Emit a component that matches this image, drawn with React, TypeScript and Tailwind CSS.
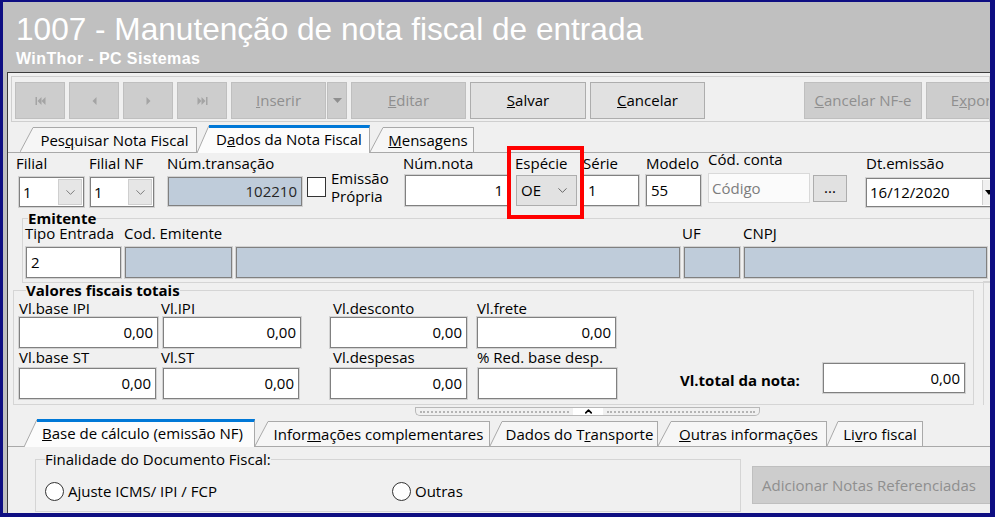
import React from 'react';
import { ChevronDown, ChevronUp } from 'lucide-react';

const edit = 'border border-[#808080] shadow-[0_0_0_1px_#d2d2d2]';
const readOnly = `${edit} bg-[#bfccda]`;
const white = `${edit} bg-white`;
const btnOff = 'h-[37px] flex items-center justify-center bg-[#cdcdcd] border border-[#bfbfbf] text-[#8f8f8f] shrink-0';
const btnOn = 'h-[37px] flex items-center justify-center bg-[#e1e1e1] border border-[#adadad] text-black shrink-0';

const NavIcon = ({ kind }: { kind: 'first' | 'prev' | 'next' | 'last' }) => (
  <svg width="11" height="10" viewBox="0 0 11 10" fill="#a4a4a4">
    {kind === 'first' && (
      <>
        <rect x="0.5" y="1" width="1.5" height="8" />
        <polygon points="6.5,1 2.5,5 6.5,9" />
        <polygon points="10.5,1 6.5,5 10.5,9" />
      </>
    )}
    {kind === 'prev' && <polygon points="7.5,1 3.5,5 7.5,9" />}
    {kind === 'next' && <polygon points="3.5,1 7.5,5 3.5,9" />}
    {kind === 'last' && (
      <>
        <polygon points="0.5,1 4.5,5 0.5,9" />
        <polygon points="4.5,1 8.5,5 4.5,9" />
        <rect x="9" y="1" width="1.5" height="8" />
      </>
    )}
  </svg>
);

interface TabProps {
  label: React.ReactNode;
  width: number;
  slant: number;
  active?: boolean;
}

const Tab: React.FC<TabProps> = ({ label, width, slant, active }) => {
  const h = active ? 28 : 25;
  const fill = active ? '#fcfcfc' : '#f6f6f6';
  return (
    <div className={`flex items-end shrink-0 ${active ? 'mb-[-1px] relative z-10' : ''}`} style={{ height: h }}>
      <svg width={slant} height={h} className="shrink-0 block">
        <polygon points={`0,${h} ${slant},0 ${slant},${h}`} fill={fill} />
        <line x1="0" y1={h} x2={slant} y2="0.5" stroke="#a9a9a9" strokeWidth="1" />
      </svg>
      <div
        className={`h-full flex items-center justify-center whitespace-nowrap border-r border-[#a9a9a9] leading-[15px] ${
          active ? 'bg-[#fcfcfc] border-t-[3px] border-t-[#0078d7] pb-[2px]' : 'bg-[#f6f6f6] border-t'
        }`}
        style={{ width }}
      >
        {label}
      </div>
    </div>
  );
};

const Combo = ({ value, w }: { value: string; w: number }) => (
  <div className={`${white} h-[30px] flex`} style={{ width: w }}>
    <div className="flex-1 pl-[3px] flex items-center leading-[15px]">{value}</div>
    <div className="w-[24px] my-[1px] mr-[1px] bg-[#e6e6e6] border border-[#cfcfcf] flex items-center justify-center">
      <ChevronDown size={15} strokeWidth={1.4} color="#6d6d6d" />
    </div>
  </div>
);

const Label = ({ children, className = '' }: { children?: React.ReactNode; className?: string }) => (
  <div className={`h-[15px] leading-[15px] whitespace-nowrap ${className}`}>{children}</div>
);

const Radio = ({ label }: { label: string }) => (
  <div className="flex items-center">
    <div className="w-[19px] h-[19px] rounded-full border border-[#333333] bg-white shrink-0" />
    <span className="ml-[4px] leading-[15px]">{label}</span>
  </div>
);

const App: React.FC = () => {
  return (
    <div className="relative w-[995px] h-[517px] overflow-hidden bg-[#0e0e82] pt-[2px] pl-[3px] pr-[5px] pb-[4px] text-[15px] text-black font-['Open_Sans',sans-serif]">
      <div className="h-full flex flex-col bg-[#c0c0c0] overflow-hidden">
        {/* title bar */}
        <div className="h-[70px] shrink-0 pl-[13px] pt-[12px] text-white font-['Liberation_Sans',Arial,sans-serif]">
          <div className="text-[31.6px] leading-[31px] whitespace-nowrap">1007 - Manutenção de nota fiscal de entrada</div>
          <div className="mt-[6px] text-[16px] leading-[16px] font-bold tracking-[0.4px] whitespace-nowrap">WinThor - PC Sistemas</div>
        </div>

        <div className="flex-1 flex pl-[4px] min-h-0">
          <div className="flex-1 flex flex-col border-l border-t border-[#3c3c3c] bg-[#f0f0f0] overflow-hidden min-w-0">
            {/* toolbar */}
            <div className="ml-[3px] mt-[3px] h-[46px] shrink-0 border border-[#cfcfcf] pl-[3px] pt-[5px] flex gap-[4px] overflow-hidden">
              <div className={`${btnOff} w-[50px]`}><NavIcon kind="first" /></div>
              <div className={`${btnOff} w-[50px]`}><NavIcon kind="prev" /></div>
              <div className={`${btnOff} w-[50px]`}><NavIcon kind="next" /></div>
              <div className={`${btnOff} w-[50px]`}><NavIcon kind="last" /></div>
              <div className="flex gap-[1px] shrink-0">
                <div className={`${btnOff} w-[95px]`}><span><u>I</u>nserir</span></div>
                <div className={`${btnOff} w-[20px]`}>
                  <svg width="9" height="5" viewBox="0 0 9 5"><polygon points="0,0 9,0 4.5,5" fill="#8f8f8f" /></svg>
                </div>
              </div>
              <div className={`${btnOff} w-[115px]`}><span><u>E</u>ditar</span></div>
              <div className={`${btnOn} w-[116px]`}><span><u>S</u>alvar</span></div>
              <div className={`${btnOn} w-[115px]`}><span><u>C</u>ancelar</span></div>
              <div className={`${btnOff} w-[118px] ml-[95px]`}><span><u>C</u>ancelar NF-e</span></div>
              <div className={`${btnOff} w-[110px]`}><span className="whitespace-nowrap">E<u>x</u>portar</span></div>
            </div>

            {/* top tabs */}
            <div className="h-[31px] shrink-0 flex items-end pl-[12px] border-b border-[#a9a9a9]">
              <Tab slant={13} width={164} label={<span>Pes<u>q</u>uisar Nota Fiscal</span>} />
              <Tab slant={12} width={161} active label={<span>D<u>a</u>dos da Nota Fiscal</span>} />
              <Tab slant={13} width={91} label={<span><u>M</u>ensagens</span>} />
            </div>

            {/* first row */}
            <div className="h-[58px] shrink-0 flex items-start">
              <div className="ml-[8px] w-[68px] shrink-0">
                <Label className="mt-[3px]">Filial</Label>
                <div className="mt-[6px] ml-[3px]"><Combo value="1" w={65} /></div>
              </div>
              <div className="ml-[5px] w-[65px] shrink-0">
                <Label className="mt-[3px]">Filial NF</Label>
                <div className="mt-[6px] ml-[1px]"><Combo value="1" w={64} /></div>
              </div>
              <div className="ml-[13px] w-[135px] shrink-0">
                <Label className="mt-[3px]">Núm.transação</Label>
                <div className={`${readOnly} mt-[6px] ml-[1px] w-[134px] h-[29px] flex items-center justify-end pr-[4px] text-[#262626] leading-[15px]`}>102210</div>
              </div>
              <div className="ml-[5px] w-[96px] shrink-0 flex items-start">
                <div className="mt-[24px] w-[19px] h-[20px] border border-[#333333] bg-white shrink-0" />
                <div className="ml-[5px] mt-[18px] flex flex-col whitespace-nowrap">
                  <span className="leading-[15px]">Emissão</span>
                  <span className="mt-[3px] leading-[15px]">Própria</span>
                </div>
              </div>
              <div className="w-[104px] shrink-0">
                <Label className="mt-[3px]">Núm.nota</Label>
                <div className={`${white} mt-[4px] ml-[2px] w-[103px] h-[31px] flex items-center justify-end pr-[4px] leading-[15px]`}>1</div>
              </div>
              <div className="ml-[8px] w-[62px] shrink-0">
                <Label className="mt-[3px]">Espécie</Label>
                <div className="mt-[4px] ml-[1px] w-[61px] h-[31px] bg-[#e2e2e2] border border-[#adadad] flex items-center pl-[4px] pr-[6px] leading-[15px]">
                  <span className="flex-1">OE</span>
                  <ChevronDown size={15} strokeWidth={1.4} color="#555555" />
                </div>
              </div>
              <div className="ml-[6px] w-[56px] shrink-0">
                <Label className="mt-[3px]">Série</Label>
                <div className={`${white} mt-[4px] w-[56px] h-[31px] flex items-center pl-[4px] leading-[15px]`}>1</div>
              </div>
              <div className="ml-[7px] w-[55px] shrink-0">
                <Label className="mt-[3px]">Modelo</Label>
                <div className={`${white} mt-[4px] w-[55px] h-[31px] flex items-center pl-[4px] leading-[15px]`}>55</div>
              </div>
              <div className="ml-[7px] w-[139px] shrink-0">
                <Label className="-mt-[1px]">Cód. conta</Label>
                <div className="mt-[6px] flex items-start">
                  <div className="w-[102px] h-[30px] bg-[#fbfbfb] border border-[#d9d9d9] flex items-center pl-[3px] text-[#7d7d7d] leading-[15px]">Código</div>
                  <div className="ml-[3px] mt-[2px] w-[34px] h-[27px] bg-[#e1e1e1] border border-[#adadad] flex items-center justify-center leading-[15px] pb-[3px]">...</div>
                </div>
              </div>
              <div className="ml-[19px] w-[140px] shrink-0">
                <Label className="mt-[3px]">Dt.emissão</Label>
                <div className={`${white} mt-[7px] w-[140px] h-[29px] flex`}>
                  <div className="w-[115px] flex items-center pl-[3px] leading-[15px]">16/12/2020</div>
                  <div className="flex-1 my-[1px] bg-[#f0f0f0] border-l border-[#cfcfcf] flex items-center pl-[2px]">
                    <svg width="8" height="5" viewBox="0 0 8 5"><polygon points="0,0 8,0 4,5" fill="#000" /></svg>
                  </div>
                </div>
              </div>
            </div>

            {/* Emitente */}
            <fieldset className="ml-[14px] mr-[-20px] shrink-0 border border-[#d5d5d5] pl-[3px] pb-[4px]">
              <legend className="ml-[2px] font-bold leading-[14px]">Emitente</legend>
              <div className="flex items-start">
                <div className="w-[95px] shrink-0">
                  <Label className="mt-[1px] -ml-[1px]">Tipo Entrada</Label>
                  <div className={`${white} mt-[6px] w-[95px] h-[31px] flex items-center pl-[4px] leading-[15px]`}>2</div>
                </div>
                <div className="ml-[4px] w-[107px] shrink-0">
                  <Label className="mt-[1px] -ml-[1px]">Cod. Emitente</Label>
                  <div className={`${readOnly} mt-[6px] w-[107px] h-[31px]`} />
                </div>
                <div className="ml-[4px] w-[444px] shrink-0">
                  <Label className="mt-[1px]" />
                  <div className={`${readOnly} mt-[6px] w-[444px] h-[31px]`} />
                </div>
                <div className="ml-[4px] w-[56px] shrink-0">
                  <Label className="mt-[1px] -ml-[2px]">UF</Label>
                  <div className={`${readOnly} mt-[6px] w-[56px] h-[31px]`} />
                </div>
                <div className="ml-[4px] w-[243px] shrink-0">
                  <Label className="mt-[1px] -ml-[1px]">CNPJ</Label>
                  <div className={`${readOnly} mt-[6px] w-[243px] h-[31px]`} />
                </div>
              </div>
            </fieldset>

            {/* Valores fiscais totais */}
            <div className="flex shrink-0">
              <fieldset className="ml-[5px] w-[961px] shrink-0 border border-[#d5d5d5] pl-[5px] pb-[5px]">
                <legend className="ml-[7px] font-bold leading-[15px]">Valores fiscais totais</legend>
                <div className="flex items-start">
                  <div className="w-[139px] shrink-0">
                    <Label className="mt-[3px]">Vl.base IPI</Label>
                    <div className={`${white} mt-[1px] w-[139px] h-[31px] flex items-center justify-end pr-[4px] leading-[15px]`}>0,00</div>
                    <Label className="mt-[2px]">Vl.base ST</Label>
                    <div className={`${white} mt-[3px] w-[137px] h-[31px] flex items-center justify-end pr-[4px] leading-[15px]`}>0,00</div>
                  </div>
                  <div className="ml-[3px] w-[140px] shrink-0">
                    <Label className="mt-[3px]">Vl.IPI</Label>
                    <div className={`${white} mt-[1px] ml-[2px] w-[138px] h-[31px] flex items-center justify-end pr-[4px] leading-[15px]`}>0,00</div>
                    <Label className="mt-[2px]">Vl.ST</Label>
                    <div className={`${white} mt-[3px] ml-[2px] w-[136px] h-[31px] flex items-center justify-end pr-[4px] leading-[15px]`}>0,00</div>
                  </div>
                  <div className="ml-[29px] w-[137px] shrink-0">
                    <Label className="mt-[3px] ml-[3px]">Vl.desconto</Label>
                    <div className={`${white} mt-[1px] w-[137px] h-[31px] flex items-center justify-end pr-[4px] leading-[15px]`}>0,00</div>
                    <Label className="mt-[2px] ml-[3px]">Vl.despesas</Label>
                    <div className={`${white} mt-[3px] w-[137px] h-[31px] flex items-center justify-end pr-[4px] leading-[15px]`}>0,00</div>
                  </div>
                  <div className="ml-[10px] w-[140px] shrink-0">
                    <Label className="mt-[3px]">Vl.frete</Label>
                    <div className={`${white} mt-[1px] w-[139px] h-[31px] flex items-center justify-end pr-[4px] leading-[15px]`}>0,00</div>
                    <Label className="mt-[2px]">% Red. base desp.</Label>
                    <div className={`${white} mt-[3px] ml-[1px] w-[139px] h-[31px]`} />
                  </div>
                  <div className="ml-[63px] mt-[65px] flex items-start shrink-0">
                    <div className="w-[143px] mt-[10px] font-bold leading-[15px] whitespace-nowrap">Vl.total da nota:</div>
                    <div className={`${white} w-[142px] h-[30px] flex items-center justify-end pr-[4px] leading-[15px]`}>0,00</div>
                  </div>
                </div>
              </fieldset>
              <div className="ml-[9px] -mt-[2px] flex-1 border-l border-t border-[#d5d5d5]" />
            </div>

            {/* splitter */}
            <div className="mt-[2px] ml-[407px] w-[345px] h-[9px] shrink-0 flex">
              <div className="w-[158px] h-full border border-r-0 border-[#b8b8b8] rounded-bl-[5px] flex items-center px-[4px]">
                <div className="w-full border-t-2 border-dotted border-[#b4b4b4]" />
              </div>
              <div className="w-[30px] h-full bg-white border-y border-[#b8b8b8] flex items-center justify-center">
                <ChevronUp size={11} strokeWidth={3.5} color="#000" />
              </div>
              <div className="flex-1 h-full border border-l-0 border-[#b8b8b8] rounded-br-[5px] flex items-center px-[4px]">
                <div className="w-full border-t-2 border-dotted border-[#b4b4b4]" />
              </div>
            </div>

            {/* bottom tabs */}
            <div className="h-[31px] shrink-0 flex items-end pl-[16px] border-b border-[#a9a9a9]">
              <Tab slant={13} width={218} active label={<span className="pr-[6px]"><u>B</u>ase de cálculo (emissão NF)</span>} />
              <Tab slant={13} width={222} label={<span>Infor<u>m</u>ações complementares</span>} />
              <Tab slant={12} width={156} label={<span>Dados do T<u>r</u>ansporte</span>} />
              <Tab slant={13} width={156} label={<span><u>O</u>utras informações</span>} />
              <Tab slant={11} width={85} label={<span>Li<u>v</u>ro fiscal</span>} />
            </div>

            {/* bottom content */}
            <div className="flex items-start shrink-0">
              <fieldset className="ml-[27px] mt-[5px] w-[706px] h-[60px] shrink-0 border border-[#d5d5d5] pl-[9px]">
                <legend className="leading-[15px]">Finalidade do Documento Fiscal:</legend>
                <div className="mt-[15px] flex items-center">
                  <div className="w-[347px] shrink-0">
                    <Radio label="Ajuste ICMS/ IPI / FCP" />
                  </div>
                  <Radio label="Outras" />
                </div>
              </fieldset>
              <div className="ml-[11px] mt-[19px] w-[250px] h-[38px] shrink-0 bg-[#cdcdcd] border border-[#bfbfbf] text-[#8f8f8f] flex items-center pl-[9px] whitespace-nowrap">
                Adicionar Notas Referenciadas
              </div>
            </div>
          </div>
        </div>
      </div>

      {/* highlight annotation */}
      <div className="absolute left-[507px] top-[146px] w-[77px] h-[73px] border-4 border-[#ff0000] pointer-events-none" />
    </div>
  );
};

export default App;
